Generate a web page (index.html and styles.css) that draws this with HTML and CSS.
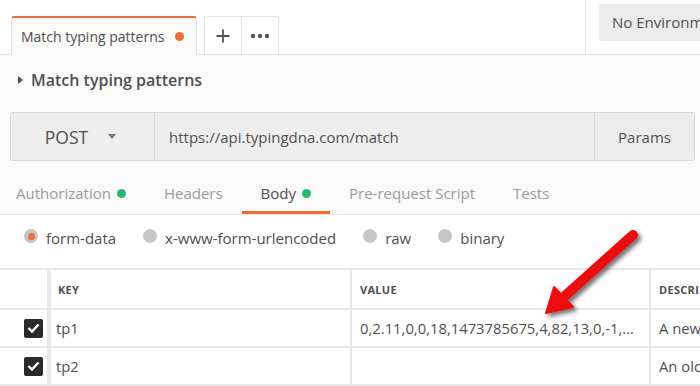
FILE: index.html
```html
<!DOCTYPE html>
<html>
<head>
    <title>Match typing patterns</title>
    <link rel="stylesheet" href="styles.css">
</head>
<body>
    <div class="app">
        <div class="topbar">
            <div class="tabs">
                <div class="tab active">
                    <span>Match typing patterns</span>
                    <span class="unsaved"></span>
                </div>
                <div class="tab-actions">
                    <div class="tab-btn">
                        <svg width="16" height="16" viewBox="0 0 16 16"><path d="M8 1.5v13M1.5 8h13" stroke="#555" stroke-width="1.8"/></svg>
                    </div>
                    <div class="tab-btn">
                        <svg width="20" height="6" viewBox="0 0 20 6"><circle cx="3" cy="3" r="2.2" fill="#555"/><circle cx="10" cy="3" r="2.2" fill="#555"/><circle cx="17" cy="3" r="2.2" fill="#555"/></svg>
                    </div>
                </div>
            </div>
            <div class="env">
                <div class="env-select">No Environment</div>
            </div>
        </div>

        <div class="request">
            <div class="title">
                <span class="caret-right"></span>
                <span>Match typing patterns</span>
            </div>

            <div class="urlbar">
                <div class="method">POST <span class="caret-down"></span></div>
                <div class="url">https://api.typingdna.com/match</div>
                <div class="params">Params</div>
            </div>

            <div class="req-tabs">
                <div class="req-tab">Authorization <span class="dot"></span></div>
                <div class="req-tab">Headers</div>
                <div class="req-tab selected">Body <span class="dot"></span></div>
                <div class="req-tab">Pre-request Script</div>
                <div class="req-tab">Tests</div>
            </div>
        </div>

        <div class="body-panel">
            <div class="body-types">
                <label class="radio"><span class="circle checked"></span>form-data</label>
                <label class="radio"><span class="circle"></span>x-www-form-urlencoded</label>
                <label class="radio"><span class="circle"></span>raw</label>
                <label class="radio"><span class="circle"></span>binary</label>
            </div>

            <div class="kv-table">
                <div class="cell"></div>
                <div class="cell head key">Key</div>
                <div class="cell head">Value</div>
                <div class="cell head">Description</div>

                <div class="cell check"><span class="checkbox"><svg width="13" height="10" viewBox="0 0 13 10"><path d="M1.5 5l3.5 3.5 6.5-7" fill="none" stroke="#fff" stroke-width="2.4"/></svg></span></div>
                <div class="cell key">tp1</div>
                <div class="cell">0,2.11,0,0,18,1473785675,4,82,13,0,-1,...</div>
                <div class="cell">A new typing pattern</div>

                <div class="cell check"><span class="checkbox"><svg width="13" height="10" viewBox="0 0 13 10"><path d="M1.5 5l3.5 3.5 6.5-7" fill="none" stroke="#fff" stroke-width="2.4"/></svg></span></div>
                <div class="cell key">tp2</div>
                <div class="cell"></div>
                <div class="cell">An old typing pattern</div>
            </div>
        </div>

        <!-- annotation arrow drawn over the table -->
        <svg class="arrow" width="140" height="110" viewBox="520 220 140 110">
            <defs>
                <filter id="shadow" x="-20%" y="-20%" width="150%" height="150%">
                    <feDropShadow dx="3" dy="3" stdDeviation="2" flood-color="#000" flood-opacity="0.55"/>
                </filter>
            </defs>
            <g filter="url(#shadow)" fill="#ee1111" stroke="#ee1111">
                <line x1="633" y1="235" x2="566" y2="295" stroke-width="10" stroke-linecap="round"/>
                <polygon points="546,313 554,287 573,307" stroke-width="2" stroke-linejoin="round"/>
            </g>
        </svg>
    </div>
</body>
</html>
```

FILE: styles.css
```css
body {
    margin: 0;
    font-family: "Open Sans", sans-serif;
    color: #505050;
    background: #fff;
}
.app {
    position: relative;
    width: 700px;
    height: 386px;
    overflow: hidden;
    background: #fafafa;
}

/* top tab strip */
.topbar {
    display: flex;
    height: 55px;
    box-sizing: border-box;
    background: #fff;
    border-bottom: 1px solid #e3e3e3;
}
.tabs {
    flex: 1;
    display: flex;
    align-items: flex-end;
    gap: 7px;
    padding-left: 11px;
    margin-bottom: -1px;
}
.tab {
    display: flex;
    align-items: center;
    justify-content: space-between;
    box-sizing: border-box;
    width: 186px;
    height: 39px;
    padding: 0 12px 0 9px;
    font-size: 14px;
    background: #fafafa;
    border: 1px solid #e3e3e3;
    border-top: 2px solid #f26b3a;
    border-bottom: none;
    border-radius: 3px 3px 0 0;
}
.unsaved {
    width: 9px;
    height: 9px;
    border-radius: 50%;
    background: #f26b3a;
}
.tab-actions {
    display: flex;
    height: 37px;
    margin-bottom: 1px;
    border: 1px solid #e3e3e3;
    border-bottom: none;
    border-radius: 3px 3px 0 0;
    background: #fff;
}
.tab-btn {
    display: flex;
    align-items: center;
    justify-content: center;
    width: 36px;
}
.tab-btn + .tab-btn {
    border-left: 1px solid #e3e3e3;
}
.env {
    width: 115px;
    box-sizing: border-box;
    padding: 4px 0 0 13px;
    border-left: 1px solid #e6e6e6;
}
.env-select {
    width: 140px;
    height: 37px;
    line-height: 37px;
    padding-left: 13px;
    font-size: 15px;
    white-space: nowrap;
    background: #ececec;
    border-radius: 4px;
}

/* request area */
.title {
    display: flex;
    align-items: center;
    gap: 8px;
    height: 50px;
    padding-left: 18px;
    font-size: 16px;
    font-weight: 600;
}
.caret-right {
    border-left: 5px solid #505050;
    border-top: 4px solid transparent;
    border-bottom: 4px solid transparent;
}
.urlbar {
    display: flex;
    height: 49px;
    margin: 7px 5px 0 10px;
    box-sizing: border-box;
    border: 1px solid #d8d8d8;
    border-radius: 3px;
    background: #eeeeee;
    font-size: 15px;
}
.method {
    display: flex;
    align-items: center;
    justify-content: center;
    gap: 20px;
    width: 144px;
    padding-right: 4px;
    box-sizing: border-box;
    font-size: 17.5px;
    border-right: 1px solid #d8d8d8;
}
.caret-down {
    border-top: 5px solid #777;
    border-left: 4px solid transparent;
    border-right: 4px solid transparent;
}
.url {
    flex: 1;
    display: flex;
    align-items: center;
    padding-left: 14px;
}
.params {
    display: flex;
    align-items: center;
    justify-content: center;
    width: 99px;
    border-left: 1px solid #d8d8d8;
    background: #ececec;
}
.req-tabs {
    display: flex;
    margin-left: -3px;
    border-bottom: 1px solid #e6e6e6;
    font-size: 15px;
}
.req-tab {
    display: flex;
    align-items: center;
    gap: 6px;
    line-height: 18px;
    padding: 23px 19px 9px;
    color: #9b9b9b;
    border-bottom: 3px solid transparent;
}
.req-tab.selected {
    color: #505050;
    border-bottom-color: #f26b3a;
}
.dot {
    width: 9px;
    height: 9px;
    border-radius: 50%;
    background: #2bb673;
}

/* body panel */
.body-panel {
    background: #fff;
}
.body-types {
    display: flex;
    gap: 27px;
    box-sizing: border-box;
    height: 53px;
    padding: 13px 0 0 24px;
    font-size: 15px;
}
.radio {
    display: flex;
    align-items: center;
    gap: 8px;
    height: 20px;
}
.circle {
    position: relative;
    width: 14px;
    height: 14px;
    margin-top: -4px;
    border-radius: 50%;
    background: #c6c6c6;
}
.circle.checked::after {
    content: "";
    position: absolute;
    left: 3.5px;
    top: 3.5px;
    width: 7px;
    height: 7px;
    border-radius: 50%;
    background: #f26b3a;
}
.kv-table {
    display: grid;
    grid-template-columns: 47px 301px 297px 200px;
    grid-template-rows: 38px 36px 36px;
    gap: 2px;
    padding: 2px 0;
    background: #e8e8e8;
    font-size: 14.8px;
}
.cell {
    display: flex;
    align-items: center;
    padding-left: 8px;
    background: #fff;
    white-space: nowrap;
    overflow: hidden;
}
.cell.key {
    border-left: 2px solid #e8e8e8;
    padding-left: 5px;
}
.head {
    font-size: 11px;
    font-weight: 700;
    text-transform: uppercase;
    letter-spacing: 0.3px;
}
.head.key {
    padding-left: 7px;
}
.check {
    justify-content: flex-end;
    padding-right: 4px;
}
.checkbox {
    display: flex;
    align-items: center;
    justify-content: center;
    width: 19px;
    height: 19px;
    border-radius: 2px;
    background: #2a2a2a;
}
.arrow {
    position: absolute;
    left: 520px;
    top: 220px;
}
```
